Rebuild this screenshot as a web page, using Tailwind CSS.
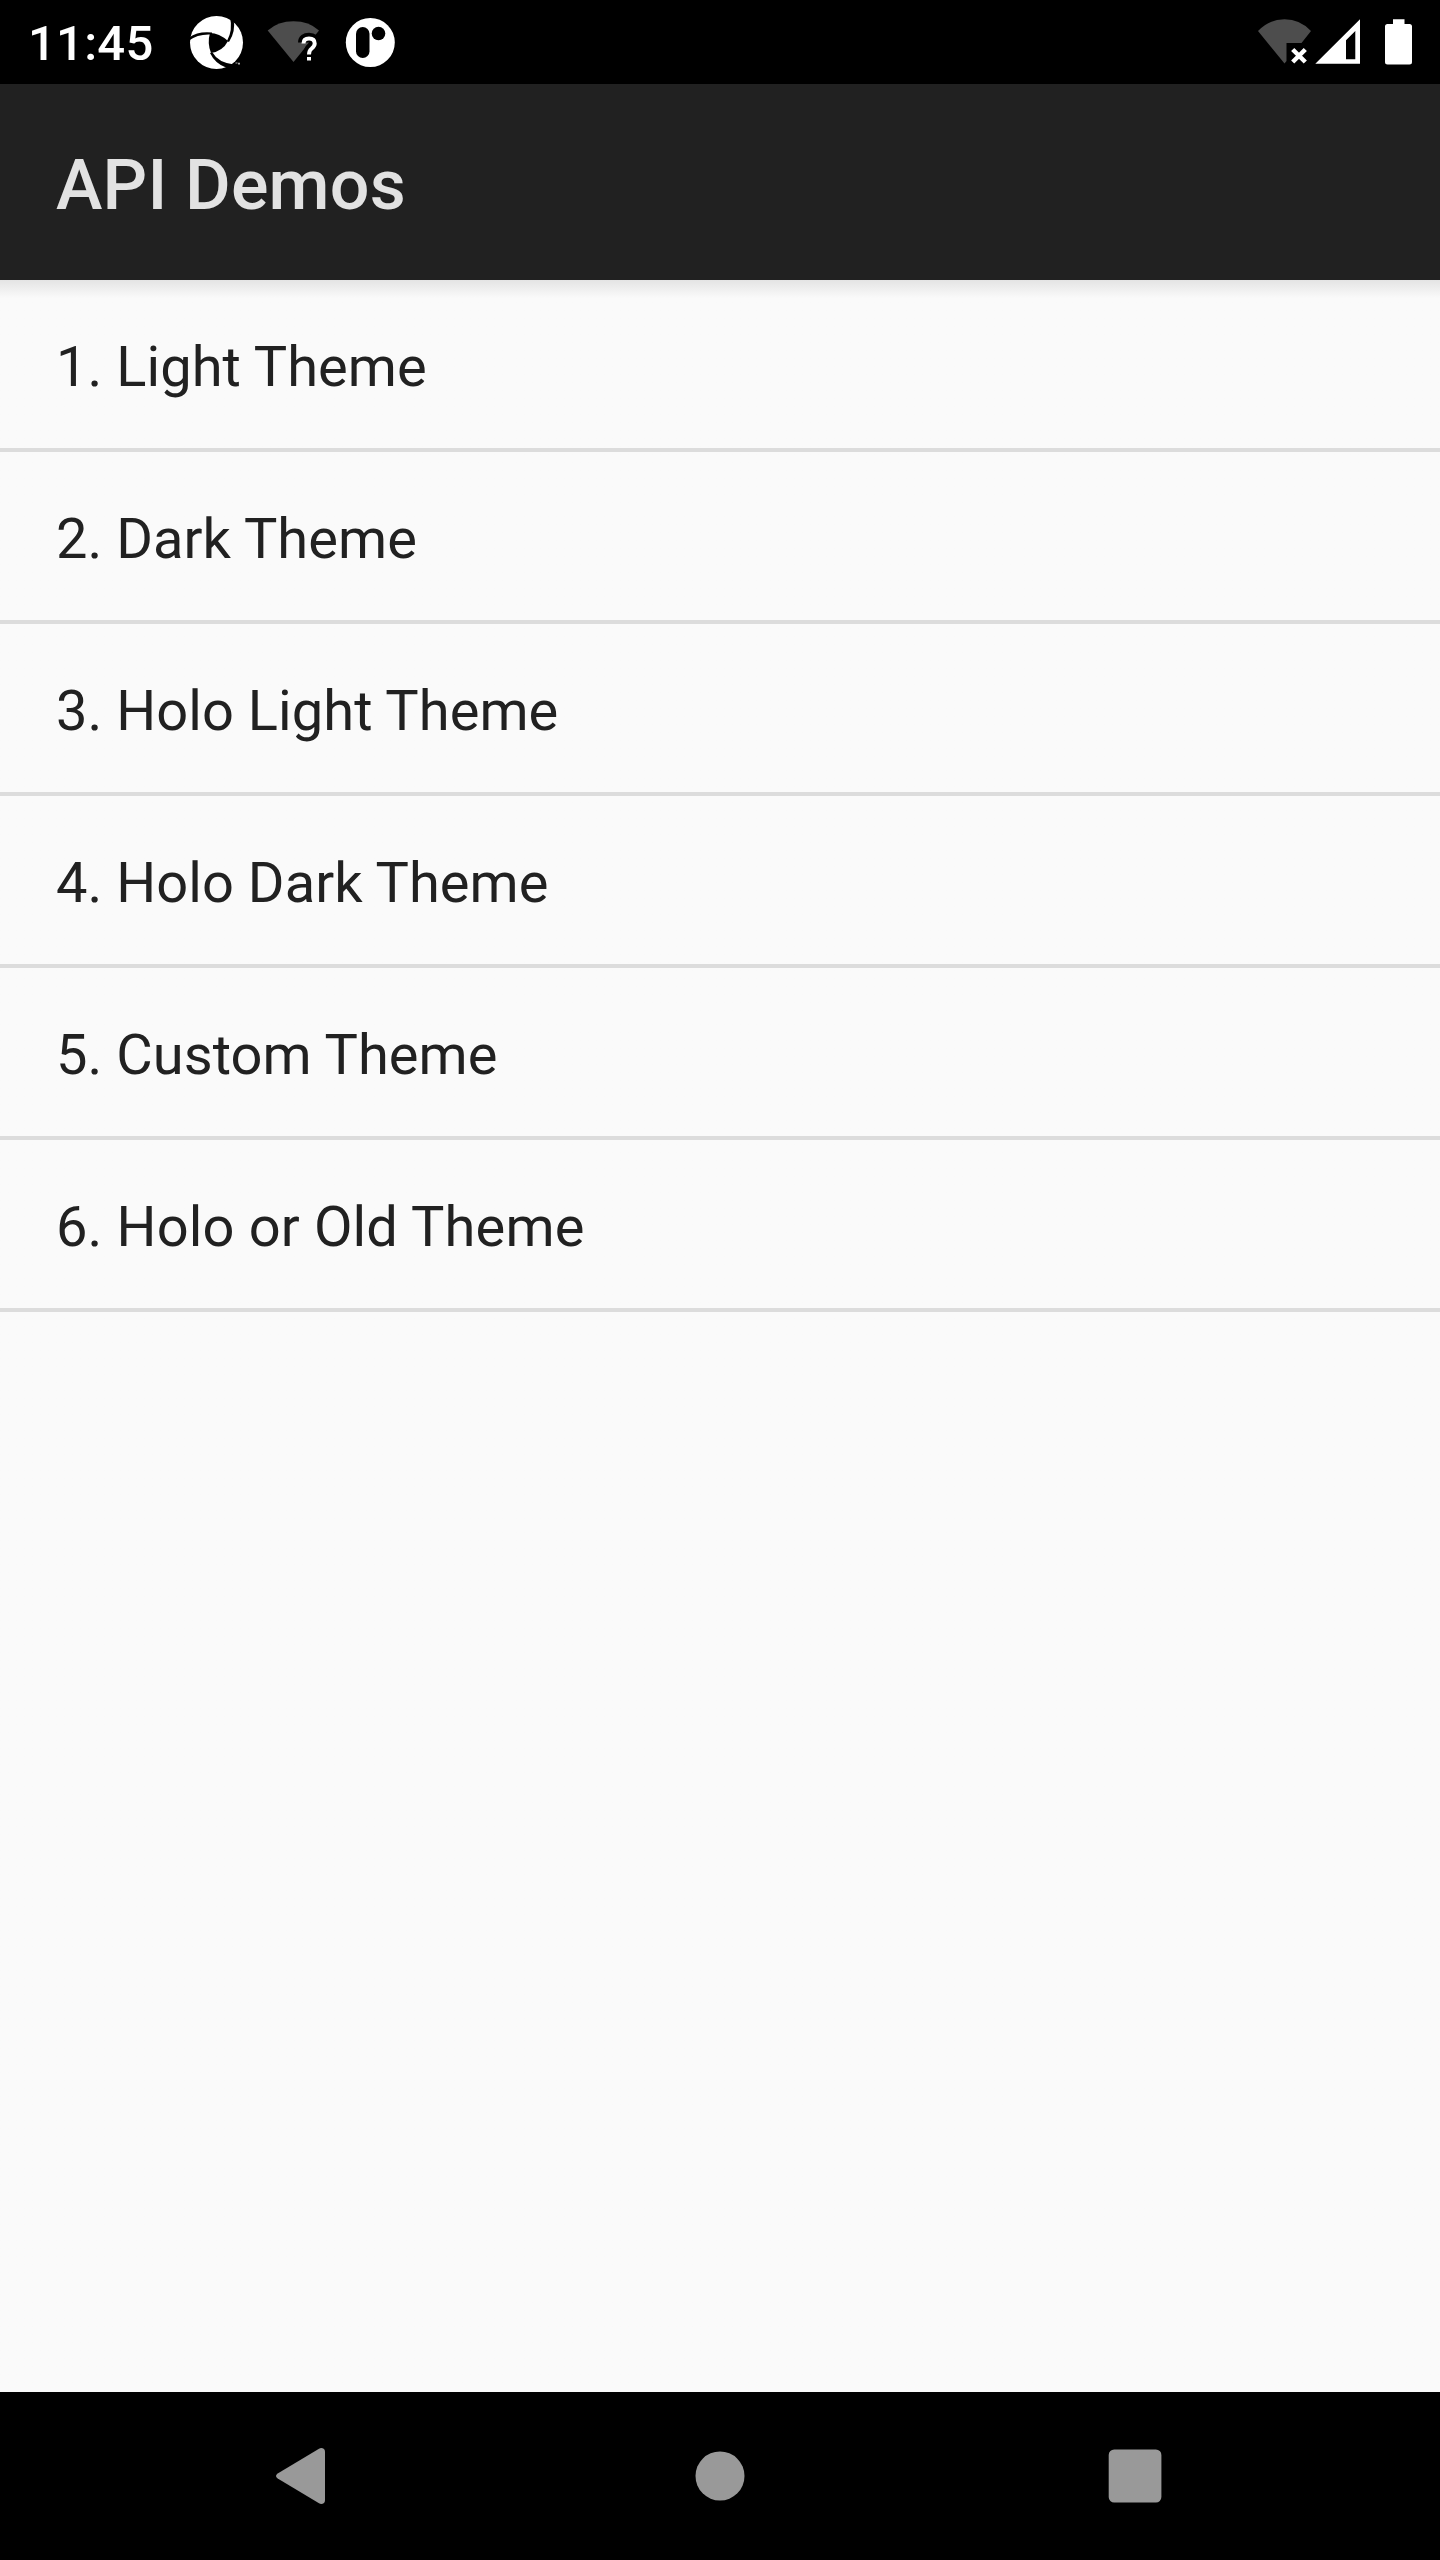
<!DOCTYPE html>
<html lang="en">
<head>
<meta charset="utf-8">
<title>API Demos</title>
<script src="https://cdn.jsdelivr.net/npm/@tailwindcss/browser@4"></script>
</head>
<body class="bg-black">
<div class="flex h-[2560px] w-[1440px] flex-col bg-[#fafafa] font-[Roboto,sans-serif]">
  <header class="flex h-[84px] shrink-0 justify-between bg-black text-white">
    <div class="flex">
      <span class="w-[188px] pl-7 text-[49px] leading-[88px] font-medium tracking-[0.25px] whitespace-nowrap">11:45</span>
      <svg class="h-[84px] w-[72px]" viewBox="188 0 72 84">
        <circle cx="216.500" cy="42.500" r="26.500" fill="#fff"/>
        <path d="M210 33Q219 33 228 41Q223 51 211 53Q207 43 210 33Z" fill="#000"/>
        <path d="M189 37.500Q198 31 212 32.500V34.500Q198 33.500 189 40.500Z" fill="#000"/>
        <path d="M230 17Q233 30 227 41L229 42Q236 31 233.500 19Z" fill="#000"/>
        <path d="M210 53L212.500 52.500Q218 62.500 234 64.500L230 69L226 67.500Q215 63.500 210 53Z" fill="#000"/>
        <path d="M235.500 63h2M238.500 64.500v-1.500h1v1.500" fill="none" stroke="#aaa" stroke-width="1"/>
      </svg>
      <svg class="h-[84px] w-[78px]" viewBox="260 0 78 84">
        <path d="M267.700 30.500Q278 21.300 293.500 21.300T319 30.500L293.500 62Z" fill="#4d4d4d"/>
        <path d="M303.500 42.500Q303.500 38.200 309 38.200Q314.500 38.200 314.500 43Q314.500 46 311.500 48Q309 50 309 54" fill="none" stroke="#000" stroke-width="11"/>
        <path d="M303.500 43.500Q303.500 38.500 309 38.500Q314.700 38.500 314.700 43.500Q314.700 46 311.700 48.500Q309 50.500 309 54.500" fill="none" stroke="#fff" stroke-width="4"/>
        <path d="M307 57h4v3.500h-4z" fill="#fff"/>
      </svg>
      <svg class="h-[84px] w-[70px]" viewBox="338 0 70 84">
        <circle cx="370.300" cy="42.500" r="24.500" fill="#fff"/>
        <rect x="356" y="27" width="13.500" height="31" rx="6.750"/>
        <circle cx="378.500" cy="33.500" r="6.800"/>
      </svg>
    </div>
    <svg class="h-[84px] w-[190px]" viewBox="1250 0 190 84">
      <path d="M1258 31Q1269 19.300 1284.500 19.300T1311 31L1301.500 43H1286.500V61L1284.500 63.500Z" fill="#4d4d4d"/>
      <path d="M1292.700 49.500L1305.300 62M1305.300 49.500L1292.700 62" stroke="#fff" stroke-width="4.500"/>
      <path fill-rule="evenodd" d="M1360 19.300V63.700H1315.300ZM1355.300 31L1346 40.300V59.300H1355.300Z" fill="#fff"/>
      <path d="M1393 19.300h11.500v4.700h5a2.500 2.500 0 0 1 2.500 2.500v35.500a2.500 2.500 0 0 1 -2.500 2.500h-22a2.500 2.500 0 0 1 -2.500 -2.500v-35.500a2.500 2.500 0 0 1 2.500 -2.500h5.500z" fill="#fff"/>
    </svg>
  </header>
  <div class="flex h-[196px] shrink-0 items-center bg-[#212121] px-14 pt-1.5 text-[70px] font-medium tracking-[0.18px] text-[#e2e2e2]">
    <h1>API Demos</h1>
  </div>
  <ul class="flex-1 bg-linear-to-b from-[#e4e4e4] to-[#fafafa] to-[18px] text-[56px] leading-[66px] tracking-[0.05px] text-[#212121]">
    <li class="flex h-[172px] items-center border-b-4 border-[#dcdcdc] px-14 pt-1.5">1. Light Theme</li>
    <li class="flex h-[172px] items-center border-b-4 border-[#dcdcdc] px-14 pt-1.5">2. Dark Theme</li>
    <li class="flex h-[172px] items-center border-b-4 border-[#dcdcdc] px-14 pt-1.5">3. Holo Light Theme</li>
    <li class="flex h-[172px] items-center border-b-4 border-[#dcdcdc] px-14 pt-1.5">4. Holo Dark Theme</li>
    <li class="flex h-[172px] items-center border-b-4 border-[#dcdcdc] px-14 pt-1.5">5. Custom Theme</li>
    <li class="flex h-[172px] items-center border-b-4 border-[#dcdcdc] px-14 pt-1.5 tracking-[0.15px]">6. Holo or Old Theme</li>
  </ul>
  <nav class="h-[168px] shrink-0 bg-black">
    <svg class="h-[168px] w-[1440px]" viewBox="0 2392 1440 168" fill="#999">
      <path d="M277.700 2473.500L319 2448.700Q321.500 2447.300 324 2449Q325 2450 325 2452V2500Q325 2502 324 2503Q321.500 2504.700 319 2503.300L277.700 2478.500Q274.300 2476 277.700 2473.500Z"/>
      <circle cx="720" cy="2476" r="24.500"/>
      <rect x="1108.700" y="2449.500" width="52.700" height="53" rx="5.500"/>
    </svg>
  </nav>
</div>
</body>
</html>
